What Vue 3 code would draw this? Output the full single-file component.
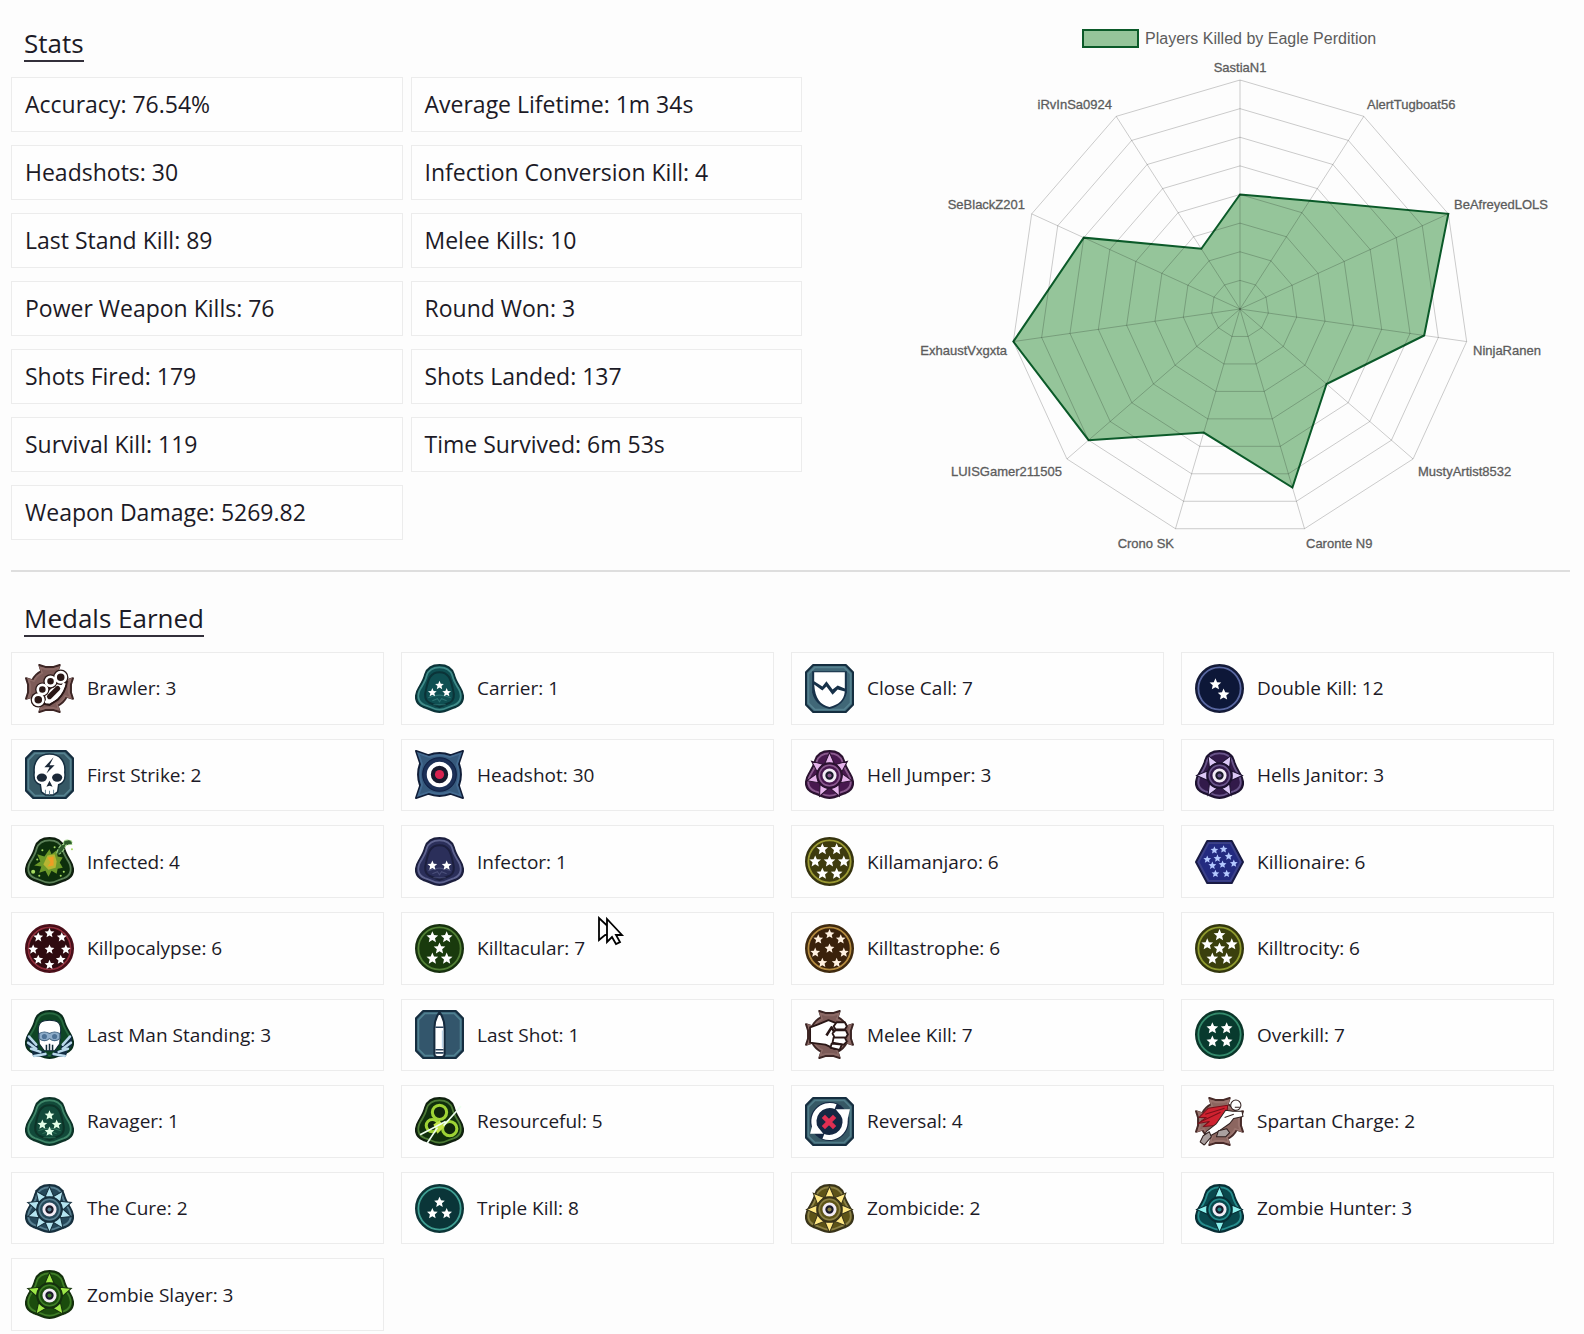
<script setup>
const stats = [
  ['Accuracy', '76.54%'],
  ['Average Lifetime', '1m 34s'],
  ['Headshots', '30'],
  ['Infection Conversion Kill', '4'],
  ['Last Stand Kill', '89'],
  ['Melee Kills', '10'],
  ['Power Weapon Kills', '76'],
  ['Round Won', '3'],
  ['Shots Fired', '179'],
  ['Shots Landed', '137'],
  ['Survival Kill', '119'],
  ['Time Survived', '6m 53s'],
  ['Weapon Damage', '5269.82'],
]

/* Radar chart */
const centre = { x: 438, y: 309 }
const radius = 229
const levels = 8
const players = [
  { name: 'SastiaN1', value: 4, x: 438, y: 72, anchor: 'middle' },
  { name: 'AlertTugboat56', value: 4.5, x: 565, y: 109, anchor: 'start' },
  { name: 'BeAfreyedLOLS', value: 8, x: 652, y: 209, anchor: 'start' },
  { name: 'NinjaRanen', value: 6.5, x: 671, y: 355, anchor: 'start' },
  { name: 'MustyArtist8532', value: 4, x: 616, y: 476, anchor: 'start' },
  { name: 'Caronte N9', value: 6.5, x: 504, y: 548, anchor: 'start' },
  { name: 'Crono SK', value: 4.5, x: 372, y: 548, anchor: 'end' },
  { name: 'LUISGamer211505', value: 7, x: 260, y: 476, anchor: 'end' },
  { name: 'ExhaustVxgxta', value: 8, x: 205, y: 355, anchor: 'end' },
  { name: 'SeBlackZ201', value: 6, x: 223, y: 209, anchor: 'end' },
  { name: 'iRvInSa0924', value: 2.5, x: 310, y: 109, anchor: 'end' },
]
const spot = (i, value) => {
  const a = (i * 2 * Math.PI) / players.length
  const r = (radius * value) / levels
  return [centre.x + r * Math.sin(a), centre.y - r * Math.cos(a)]
}
const ring = (value) => players.map((_, i) => spot(i, value).join()).join(' ')
const area = players.map((p, i) => spot(i, p.value).join()).join(' ')

/* Medal artwork */
const shapes = {
  circle: 'M24 1A23 23 0 1 1 24 47A23 23 0 1 1 24 1Z',
  trefoil:
    'M24 1C31 1 36 4 38 10C39 15 41 18 44 23C49 31 48 39 40 42C35 43 31 47 24 47C17 47 13 43 8 42C0 39-1 31 4 23C7 18 9 15 10 10C12 4 17 1 24 1Z',
  hex: 'M12 4H36L47 24.500L36 45H12L1 24.500Z',
  plate: 'M8 1H40L47 8V40L40 47H8L1 40V8Z',
  gear: 'M14 1L20 3H28L34 1L32 7Q38 10 41 16L47 14L45 20V28L47 34L41 32Q38 38 32 41L34 47L28 45H20L14 47L16 41Q10 38 7 32L1 34L3 28V20L1 14L7 16Q10 10 16 7Z',
  spiked: 'M1 1L13 5Q24 1 35 5L47 1L43 13Q47 24 43 35L47 47L35 43Q24 47 13 43L1 47L5 35Q1 24 5 13Z',
}
const star = (x, y, r) => {
  let d = ''
  for (let i = 0; i < 10; i++) {
    const q = i % 2 ? r * 0.46 : r
    const a = (i * Math.PI) / 5
    d += (i ? 'L' : 'M') + (x + q * Math.sin(a)).toFixed(2) + ' ' + (y - q * Math.cos(a)).toFixed(2)
  }
  return d + 'Z'
}
const rays = (n, turn = 0) => Array.from({ length: n }, (_, i) => turn + (i * 360) / n)

const medals = [
  { name: 'Brawler', count: 3, shape: 'gear', fill: '#7d5b58', rim: '#3c2524', hi: '#8c6a66', art: 'knuckles' },
  { name: 'Carrier', count: 1, shape: 'trefoil', fill: '#0f4f52', rim: '#0b3338', hi: '#3f8a88', r: 4.5, skull: true, stars: [[24, 21], [17, 28], [31, 28]] },
  { name: 'Close Call', count: 7, shape: 'plate', fill: '#406777', rim: '#152e40', hi: '#55818f', art: 'shield' },
  { name: 'Double Kill', count: 12, shape: 'circle', fill: '#0d1738', rim: '#151b38', hi: '#5967a0', r: 6, stars: [[20, 20], [28, 30]] },
  { name: 'First Strike', count: 2, shape: 'plate', fill: '#365865', rim: '#152e40', hi: '#55818f', art: 'skull' },
  { name: 'Headshot', count: 30, shape: 'spiked', fill: '#36597c', rim: '#101d38', hi: '#436a90', art: 'target' },
  { name: 'Hell Jumper', count: 3, shape: 'trefoil', fill: '#48184f', rim: '#2b1230', hi: '#8a5a8e', ray: '#e6b4ec', rays: rays(7) },
  { name: 'Hells Janitor', count: 3, shape: 'trefoil', fill: '#321a4a', rim: '#1d1230', hi: '#69558a', ray: '#dcc8f6', rays: rays(6, 30) },
  { name: 'Infected', count: 4, shape: 'trefoil', fill: '#0d2f0c', rim: '#101f10', hi: '#5c8058', art: 'infected' },
  { name: 'Infector', count: 1, shape: 'trefoil', fill: '#2b2f5a', rim: '#1c1f3e', hi: '#5f6490', r: 5, skull: true, stars: [[17, 28], [31, 28]] },
  { name: 'Killamanjaro', count: 6, shape: 'circle', fill: '#3e3b0e', rim: '#35330f', hi: '#9b9a34', r: 6, stars: [[17, 12], [31, 12], [10, 24], [24, 24], [38, 24], [17, 36], [31, 36]] },
  { name: 'Killionaire', count: 6, shape: 'hex', fill: '#232a80', rim: '#191b44', hi: '#3c4188', r: 4, tint: '#b5c9ff', stars: [[19, 13], [28, 12], [12, 22], [22, 21], [33, 19], [17, 28], [27, 27], [38, 26], [20, 36], [31, 36]] },
  { name: 'Killpocalypse', count: 6, shape: 'circle', fill: '#2f0b10', rim: '#4c0f1a', hi: '#8d2b39', r: 5, stars: [[24, 9], [36, 13], [40, 25], [35, 35], [24, 40], [13, 35], [8, 25], [13, 13], [24, 25]] },
  { name: 'Killtacular', count: 7, shape: 'circle', fill: '#193a0d', rim: '#17300f', hi: '#517f35', r: 6, stars: [[17, 13], [31, 13], [24, 24], [17, 34], [31, 34]] },
  { name: 'Killtastrophe', count: 6, shape: 'circle', fill: '#3a220b', rim: '#402b10', hi: '#b38a3f', r: 5, tint: '#fff1e0', stars: [[24, 10], [35, 15], [38, 28], [31, 38], [17, 38], [10, 28], [13, 15], [24, 24]] },
  { name: 'Killtrocity', count: 6, shape: 'circle', fill: '#3a3f0d', rim: '#32360e', hi: '#8e9a2e', r: 6, stars: [[24, 11], [36, 20], [31, 34], [17, 34], [12, 20], [24, 24]] },
  { name: 'Last Man Standing', count: 3, shape: 'trefoil', fill: '#0e4524', rim: '#0a2c1c', hi: '#27683f', art: 'lastman' },
  { name: 'Last Shot', count: 1, shape: 'plate', fill: '#33566c', rim: '#152e40', hi: '#4f8090', art: 'bullet' },
  { name: 'Melee Kill', count: 7, shape: 'gear', fill: '#7d5b58', rim: '#3c2524', hi: '#8c6a66', art: 'fist' },
  { name: 'Overkill', count: 7, shape: 'circle', fill: '#083a2e', rim: '#0b3529', hi: '#348a6b', r: 6, stars: [[17, 18], [31, 18], [17, 31], [31, 31]] },
  { name: 'Ravager', count: 1, shape: 'trefoil', fill: '#124a3a', rim: '#0d3328', hi: '#3f8668', r: 5, skull: true, tint: '#e4ffe8', stars: [[24, 18], [17, 27], [31, 27], [24, 34]] },
  { name: 'Resourceful', count: 5, shape: 'trefoil', fill: '#10300c', rim: '#10200f', hi: '#4c7a35', art: 'biohazard' },
  { name: 'Reversal', count: 4, shape: 'plate', fill: '#365865', rim: '#152e40', hi: '#4f7b88', art: 'reversal' },
  { name: 'Spartan Charge', count: 2, shape: 'gear', fill: '#8c6660', rim: '#472a28', hi: '#9a746e', art: 'charge' },
  { name: 'The Cure', count: 2, shape: 'trefoil', fill: '#25485a', rim: '#162f3d', hi: '#577f90', ray: '#b4e4f0', rays: rays(10) },
  { name: 'Triple Kill', count: 8, shape: 'circle', fill: '#0a3538', rim: '#0c3537', hi: '#3f9e92', r: 5.5, stars: [[24, 18], [17, 29], [31, 29]] },
  { name: 'Zombicide', count: 2, shape: 'trefoil', fill: '#5d5317', rim: '#38331a', hi: '#8b8146', ray: '#ffe884', rays: rays(8) },
  { name: 'Zombie Hunter', count: 3, shape: 'trefoil', fill: '#09484d', rim: '#082e35', hi: '#258b8b', ray: '#8df0ec', rays: rays(4) },
  { name: 'Zombie Slayer', count: 3, shape: 'trefoil', fill: '#1b4c0d', rim: '#14300d', hi: '#3f7d27', ray: '#9ee848', rays: rays(5) },
]
</script>

<template>
  <main class="page">
    <section class="overview">
      <div class="stats">
        <h2 class="title">Stats</h2>
        <ul class="stat-grid">
          <li v-for="[label, value] in stats" :key="label" class="stat">{{ label }}: {{ value }}</li>
        </ul>
      </div>

      <svg class="radar" viewBox="0 0 768 556" role="img" aria-label="Players Killed by Eagle Perdition">
        <rect x="281" y="30" width="55" height="17" class="area" />
        <text x="343" y="44" class="legend">Players Killed by Eagle Perdition</text>
        <polygon :points="area" class="area" />
        <g class="web">
          <polygon v-for="n in levels" :key="n" :points="ring(n)" />
          <line
            v-for="(p, i) in players"
            :key="p.name"
            :x1="centre.x"
            :y1="centre.y"
            :x2="spot(i, levels)[0]"
            :y2="spot(i, levels)[1]"
          />
        </g>
        <text v-for="p in players" :key="p.name" :x="p.x" :y="p.y" :text-anchor="p.anchor" class="axis">{{ p.name }}</text>
      </svg>
    </section>

    <section class="medals">
      <h2 class="title">Medals Earned</h2>
      <ul class="medal-grid">
        <li v-for="m in medals" :key="m.name" class="medal">
          <svg class="icon" viewBox="0 0 48 48" aria-hidden="true">
            <path :d="shapes[m.shape]" :fill="m.fill" :stroke="m.rim" stroke-width="2" stroke-linejoin="round" />
            <path
              :d="shapes[m.shape]"
              fill="none"
              :stroke="m.hi"
              stroke-width="2"
              transform="translate(2.400 2.400) scale(.9)"
            />

            <g v-if="m.skull">
              <path d="M24 8C33 8 35 15 37 24C39 31 38 36 34 38L24 42L14 38C10 36 9 31 11 24C13 15 15 8 24 8Z" :fill="m.fill" :stroke="m.rim" stroke-width="2" />
              <path d="M13 33Q24 28 35 33M17 36L22 34L24 37L26 34L31 36M18 40H30" fill="none" :stroke="m.hi" stroke-width="1" opacity=".6" />
            </g>

            <template v-if="m.stars">
              <path v-for="([x, y], i) in m.stars" :key="i" :d="star(x, y, m.r)" :fill="m.tint || '#fff'" />
            </template>

            <g v-if="m.rays">
              <path
                v-for="a in m.rays"
                :key="a"
                d="M24 2.500L28.500 13H19.500Z"
                :transform="`rotate(${a} 24 25)`"
                :fill="m.ray"
                :stroke="m.rim"
                stroke-width="1"
              />
              <circle cx="24" cy="25" r="12" :fill="m.fill" :stroke="m.rim" stroke-width="2" />
              <circle cx="24" cy="25" r="10" fill="none" :stroke="m.hi" stroke-width="1.500" />
              <circle cx="24" cy="25" r="5.500" fill="#1a1a2a" stroke="#f3ecf5" stroke-width="2.800" />
              <circle cx="24" cy="25" r="2" :fill="m.hi" />
            </g>

            <g v-if="m.art === 'knuckles'">
              <path d="M13 35L36 13L41 17Q40 27 32 35L24 40L18 39Z" fill="#fff" stroke="#2a1716" stroke-width="2" />
              <g fill="#2a1716">
                <circle cx="13" cy="35" r="7.500" />
                <circle cx="17" cy="25" r="7" />
                <circle cx="25" cy="17" r="7" />
                <circle cx="35" cy="13" r="7.500" />
              </g>
              <g fill="#2a1716" stroke="#fff" stroke-width="2.600">
                <circle cx="13" cy="35" r="5" />
                <circle cx="17" cy="25" r="4.500" />
                <circle cx="25" cy="17" r="4.500" />
                <circle cx="35" cy="13" r="5" />
              </g>
              <path d="M21 37Q32 36 38 20" fill="none" stroke="#fff" stroke-width="3" stroke-linecap="round" />
              <path d="M24 32L32 24" stroke="#2a1716" stroke-width="5" stroke-linecap="round" />
            </g>

            <g v-else-if="m.art === 'shield'">
              <path d="M7 7H41V28Q38 41 24 44Q10 41 7 28Z" fill="#173149" />
              <path d="M9 8H39V24L32 21L27 25L21 17L17 22L9 17ZM9 20L17 26L21 22L27 30L32 25L39 27C38 36 33 40 24 42C15 40 10 34 9 20Z" fill="#fff" />
            </g>

            <g v-else-if="m.art === 'skull'">
              <path d="M24 4C35 4 40 12 39 22C40 29 37 33 33 34L32 41L28 44H20L16 41L15 34C11 33 8 29 9 22C8 12 13 4 24 4Z" fill="#fff" stroke="#152e40" stroke-width="1.500" />
              <ellipse cx="16.500" cy="27" rx="5" ry="4" fill="#1b2838" />
              <ellipse cx="31.500" cy="27" rx="5" ry="4" fill="#1b2838" />
              <path d="M24 30L27 36L24 35L21 36ZM28 7L19 17H24L21 23L29 15H24Z" fill="#1b2838" />
              <path d="M20 39V43M24 40V44M28 39V43" stroke="#6a8594" stroke-width="1" />
            </g>

            <g v-else-if="m.art === 'target'">
              <circle cx="24" cy="24" r="16.500" fill="#1c3057" stroke="#0f2044" />
              <circle cx="24" cy="24" r="10.500" fill="#171a2e" stroke="#fff" stroke-width="4" />
              <circle cx="24" cy="24" r="4.500" fill="#d8224f" />
            </g>

            <g v-else-if="m.art === 'infected'">
              <path d="M24 12L26 17L31 13L32 19L37 20L34 25L37 30L32 31L31 36L26 33L23 39L20 33L14 35L16 29L9 28L15 24L12 17L19 19Z" fill="#6c992a" />
              <path d="M22 18L29 17L31 24L30 30L23 32L18 27Z" fill="#b6b532" />
              <path d="M22 20L28 19L28 28L22 29L25 25Z" fill="#ee9d25" />
              <path d="M31 16Q33 8 38 7Q37 3 42 3Q47 3 46 7L40 8Q38 14 33 17" fill="#2c5a2a" stroke="#9fd287" stroke-width="1" stroke-dasharray="4 1" />
              <g fill="#a8dc62">
                <circle cx="8" cy="34" r="2" /><circle cx="12" cy="22" r="1" /><circle cx="17" cy="13" r="1" />
                <circle cx="38" cy="34" r="1" /><circle cx="35" cy="38" r="1" /><circle cx="46" cy="12" r="1" />
                <circle cx="14" cy="38" r="1" /><circle cx="29" cy="10" r="1" />
              </g>
            </g>

            <g v-else-if="m.art === 'lastman'">
              <path d="M2 24L13 35L13 44L2 35ZM46 24L35 35L35 44L46 35ZM6 38L18 40L23 45L8 46ZM42 38L30 40L25 45L40 46Z" fill="#112c42" />
              <path d="M13 20C13 11 18 10 24 10C30 10 35 11 35 20L34 33L29 40H19L14 33Z" fill="#fff" stroke="#0d2535" />
              <path d="M14 23Q19 20 24 23Q29 20 34 23V28Q29 32 24 28Q19 32 14 28Z" fill="#8eadca" stroke="#456885" />
              <circle cx="19" cy="26" r="2.500" fill="#4d7296" /><circle cx="29" cy="26" r="2.500" fill="#4d7296" />
              <path d="M21 34V40M24 33V40M27 34V40" stroke="#122c3b" stroke-width="1.500" />
              <path d="M4 26L11 34M3 32L11 38M6 38L15 41M9 45L20 43M44 26L37 34M45 32L37 38M42 38L33 41M39 45L28 43" stroke="#b9d8ea" stroke-width="2.500" stroke-linecap="round" />
            </g>

            <g v-else-if="m.art === 'bullet'">
              <path d="M24 2Q29 9 29 18V43Q29 46 26 46H22Q19 46 19 43V18Q19 9 24 2Z" fill="#fff" stroke="#152a3d" stroke-width="2" />
              <path d="M20 17H28M20 39H28M20 42H28" stroke="#28405a" stroke-width="1.500" />
              <path d="M27 20V37" stroke="#bcd4e8" stroke-width="1.500" />
            </g>

            <g v-else-if="m.art === 'fist'" fill="#fff" stroke="#2a1716" stroke-width="1.800" stroke-linejoin="round">
              <path d="M5 17L13 14L23 10L31 13L33 20L35 33L29 38L20 34L5 32Z" />
              <path d="M31 12L39 12L41 16L39 19H30L28 16Z" />
              <path d="M29 20L40 20L42 24L40 27H29L27 23Z" />
              <path d="M28 27L39 27L41 31L38 34L27 32Z" />
              <path d="M26 33L36 34L34 39L25 37Z" />
              <path d="M21 25L26 17L29 22" fill="none" stroke-width="2.500" />
            </g>

            <g v-else-if="m.art === 'biohazard'">
              <g fill="#10260c" stroke="#9ed335" stroke-width="3">
                <circle cx="24" cy="15" r="7" />
                <circle cx="17" cy="28" r="6" />
                <circle cx="34" cy="31" r="7" />
              </g>
              <path d="M24 23L29 29L22 36L18 27Z" fill="#c4e548" />
              <path d="M5 37L30 24M12 45L22 30M28 28L45 9" stroke="#effff0" stroke-width="1.600" />
            </g>

            <g v-else-if="m.art === 'reversal'">
              <circle cx="24" cy="24" r="19" fill="#152843" />
              <path d="M30 9.500A15.500 15.500 0 0 0 11 32M18 38.500A15.500 15.500 0 0 0 37 16" fill="none" stroke="#fff" stroke-width="5" />
              <path d="M30 12H44L41 25ZM18 36H5L8 24Z" fill="#fff" />
              <path d="M18 19L29 30M29 19L18 30" stroke="#e12f52" stroke-width="4.500" />
            </g>

            <g v-else-if="m.art === 'charge'" stroke="#31201f" stroke-linejoin="round">
              <path d="M4 20L13 11L32 8L31 20L20 28L8 29L14 24L3 26L11 20Z" fill="#cf2230" stroke="#7a101a" />
              <path d="M6 24L25 15M10 17L29 11" stroke="#7a101a" fill="none" />
              <path d="M30 13L37 14L46 14L47 19L38 21L34 26L24 33L15 38L10 46L6 43L11 34L21 26Z" fill="#fff" />
              <path d="M14 34L8 38L5 44L9 47L16 39ZM23 33L31 31L34 35L30 39L21 39Z" fill="#aaa09f" />
              <circle cx="40" cy="8" r="5" fill="#fff" />
              <path d="M39 10H44M29 20L38 17" fill="none" />
            </g>
          </svg>
          <span>{{ m.name }}: {{ m.count }}</span>
          <svg v-if="m.name === 'Killtacular'" class="pointer" viewBox="0 0 28 30" aria-hidden="true">
            <g fill="#fff" stroke="#000" stroke-width="1.800">
              <path d="M2 2V24L8 19L18 17Z" />
              <path d="M10 3V26L15 21L19 28L23 26L19 19H25Z" />
            </g>
          </svg>
        </li>
      </ul>
    </section>
  </main>
</template>

<style>
body {
  margin: 0;
  background: #fdfdfd;
}
</style>

<style scoped>
.page {
  box-sizing: border-box;
  display: flex;
  flex-direction: column;
  min-height: 100vh;
  padding: 0 14px 3px 11px;
  color: #1c1a26;
  font-family: "Open Sans", "Noto Sans", sans-serif;
}

.overview {
  display: grid;
  grid-template-columns: 791fr 768fr;
  align-items: start;
  border-bottom: 2px solid #dedede;
  padding-bottom: 14px;
}

.title {
  width: fit-content;
  margin: 26px 0 15px 13px;
  border-bottom: 2px solid #33303a;
  font-size: 26px;
  font-weight: 400;
  line-height: 34px;
}

ul {
  margin: 0;
  padding: 0;
  list-style: none;
}

.stat-grid {
  display: grid;
  grid-template-columns: 1fr 1fr;
  gap: 13px 8px;
}

.stat,
.medal {
  box-sizing: border-box;
  border: 1px solid #ececec;
  background: #fefefe;
}

.stat {
  padding: 10px 13px 11px;
  font-size: 23px;
  line-height: 32px;
}

.radar {
  display: block;
  width: 100%;
}

.area {
  fill: #95c59a;
  stroke: #0b5a29;
  stroke-width: 2;
}

.web {
  fill: none;
  stroke: rgba(0, 0, 0, 0.2);
  stroke-width: 1;
}

.legend,
.axis {
  fill: #5c5c5c;
  font-family: "Liberation Sans", Arial, sans-serif;
}

.legend {
  font-size: 16px;
}

.axis {
  font-size: 13px;
  stroke: #5c5c5c;
  stroke-width: 0.3;
}

.medals {
  display: flex;
  flex: 1;
  flex-direction: column;
  padding-right: 16px;
}

.medals .title {
  margin-top: 29px;
}

.medal-grid {
  display: grid;
  flex: 1;
  grid-template-columns: repeat(4, 1fr);
  grid-auto-rows: 1fr;
  gap: 14px 17px;
}

.medal {
  position: relative;
  display: flex;
  align-items: center;
  gap: 13px;
  padding: 10px 13px;
  font-size: 19px;
  line-height: 28px;
}

.icon {
  flex: none;
  width: 49px;
  height: 49px;
}

.pointer {
  position: absolute;
  top: 3px;
  left: 195px;
  width: 28px;
  height: 30px;
}
</style>
